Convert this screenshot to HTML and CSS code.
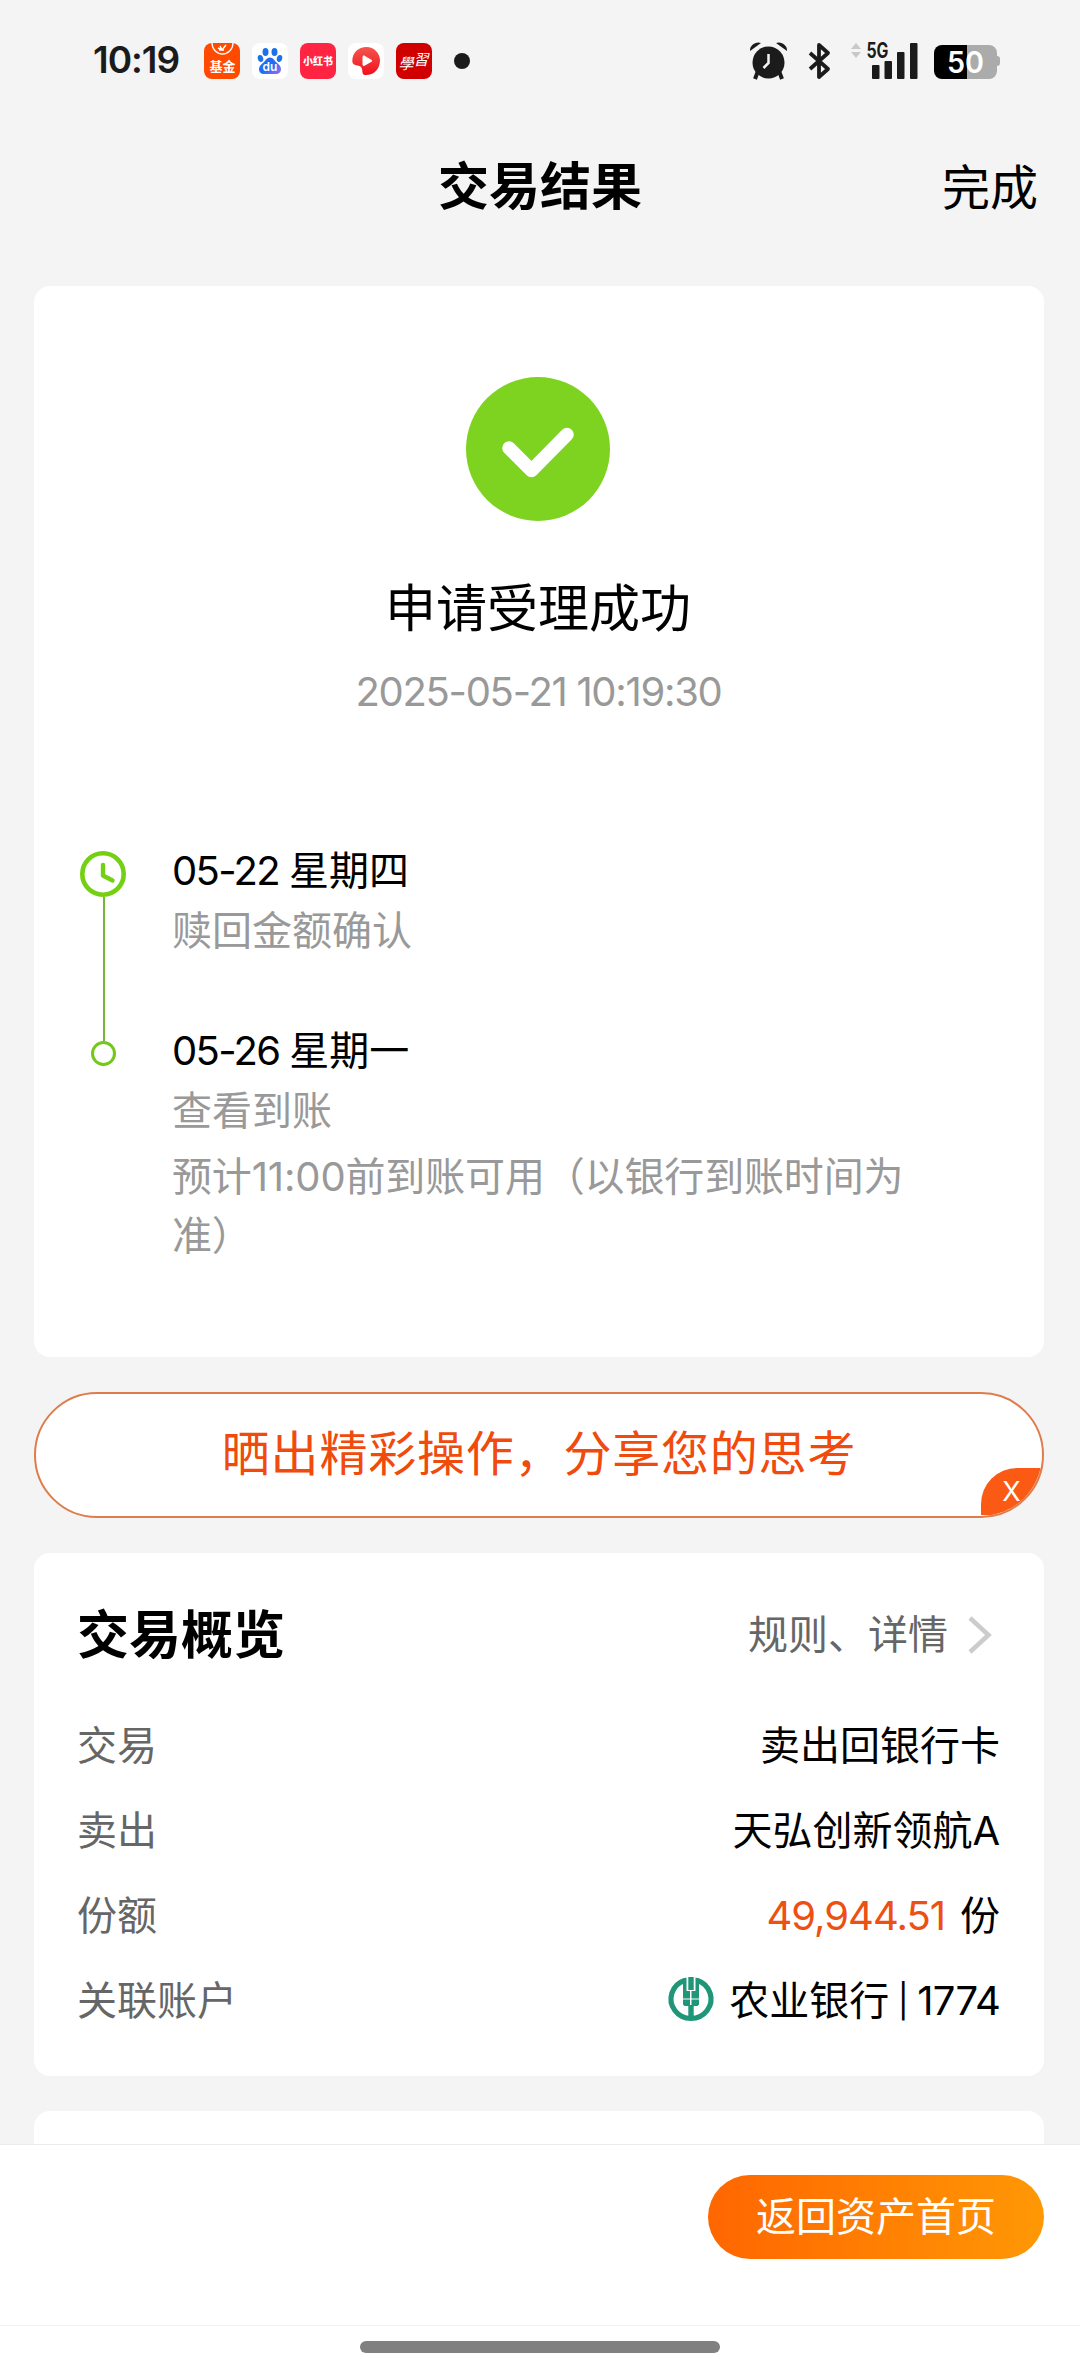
FILE: index.html
```
<!DOCTYPE html>
<html lang="zh-CN">

<head>
    <meta charset="UTF-8">
    <meta name="viewport" content="width=device-width, initial-scale=1.0">
    <title>交易结果</title>
    <link rel="stylesheet" href="styles.css">
</head>

<body>
    <div class="status">
        <span class="clock">10:19</span>
        <div class="apps">
            <svg class="app" viewBox="0 0 36 36">
                <rect width="36" height="36" rx="8" fill="#ff4a00" />
                <path d="M8 0a10.500 11 0 0 0 21 0" fill="none" stroke="#fff" stroke-width="1.300" />
                <path d="M14 5l4 2 4-5M16 3l2 4M15 7l5 0" fill="none" stroke="#fff" stroke-width="1.500" />
                <text x="18.500" y="28" font-size="13" font-weight="700" fill="#fff" text-anchor="middle">基金</text>
            </svg>
            <svg class="app" viewBox="0 0 36 36">
                <defs>
                    <linearGradient id="paw" x1="0" y1="0" x2="1" y2="1">
                        <stop offset="0.500" stop-color="#1f6ff0" />
                        <stop offset="1" stop-color="#a06cf5" />
                    </linearGradient>
                </defs>
                <rect width="36" height="36" rx="8" fill="#fff" />
                <g fill="#1a73ea">
                    <ellipse cx="13.500" cy="9" rx="3" ry="4" />
                    <ellipse cx="22.500" cy="9" rx="3" ry="4" />
                    <ellipse cx="8.500" cy="15.500" rx="2.700" ry="3.500" transform="rotate(-15 8.500 15.500)" />
                    <ellipse cx="27.500" cy="15.500" rx="2.700" ry="3.500" transform="rotate(15 27.500 15.500)" />
                </g>
                <path d="M18 14.500c3 0 4.500 3 6.500 5 2.500 2 4.500 4 4.500 6.500 0 3-2 5-5 5H12c-3 0-5-2-5-5 0-2.500 2-4.500 4.500-6.500 2-2 3.500-5 6.500-5z" fill="url(#paw)" />
                <text class="latin" x="18" y="28" font-size="12" font-weight="600" fill="#fff" text-anchor="middle">du</text>
            </svg>
            <svg class="app" viewBox="0 0 36 36">
                <rect width="36" height="36" rx="8" fill="#ff2442" />
                <text x="18" y="22" font-size="10" font-weight="900" fill="#fff" text-anchor="middle">小红书</text>
            </svg>
            <svg class="app" viewBox="0 0 36 36">
                <defs>
                    <linearGradient id="melon" x1="0" y1="0" x2="0" y2="1">
                        <stop offset="0" stop-color="#f5564e" />
                        <stop offset="1" stop-color="#f0101c" />
                    </linearGradient>
                </defs>
                <rect width="36" height="36" rx="8" fill="#fff" />
                <path d="M4.300 18C4.300 9.500 10.500 4 18.500 4 26 4 32 10 32 17.500 32 26 26 32 18 32c-3 0-3.500-1.500-3.700-4-.3-3.500-1.300-5-5-5.500-3-.3-5-1.500-5-4.500z" fill="url(#melon)" />
                <path d="M14.500 14.500c0-2 1-2.300 2.500-1.500l6 3.400c1.500 1 1.500 1.700 0 2.700l-6 3.400c-1.500.8-2.500.4-2.500-1.500z" fill="#fff" />
            </svg>
            <svg class="app" viewBox="0 0 36 36">
                <rect width="36" height="36" rx="8" fill="#d00000" />
                <g fill="#fff" font-size="15" text-anchor="middle">
                    <text x="11" y="26" transform="translate(5.500 0) skewX(-14)">學</text>
                    <text x="25" y="22" transform="translate(5.500 0) skewX(-14)">習</text>
                </g>
            </svg>
        </div>
        <span class="dot"></span>
        <svg class="indicators" width="252" height="40" viewBox="0 0 252 40">
            <g fill="#1b1b1b">
                <circle cx="18.500" cy="21.500" r="16" />
                <path d="M8 30l-3 8M29 30l3 8" stroke="#1b1b1b" stroke-width="4" />
                <path d="M0 10C-.5 4 6 0 11 2z" />
                <path d="M37 10C37.500 4 31 0 26 2z" />
            </g>
            <path d="M18.500 13v9l-5 5" fill="none" stroke="#f4f4f4" stroke-width="2.500" />
            <path d="M60 12l18 16-9 8V4l9 8-18 16" fill="none" stroke="#1b1b1b" stroke-width="3.800" stroke-linejoin="round" />
            <path d="M101 8l5-6 5 6zM101 11l5 6 5-6z" fill="#c8c8c8" />
            <text class="latin" x="127.500" y="16.500" font-size="21" font-weight="700" fill="#1b1b1b" text-anchor="middle" textLength="22" lengthAdjust="spacingAndGlyphs">5G</text>
            <g fill="#1b1b1b">
                <rect x="122" y="24" width="7.500" height="14" rx="1" />
                <rect x="134.500" y="20" width="7.500" height="18" rx="1" />
                <rect x="147" y="11" width="7.500" height="27" rx="1" />
                <rect x="160" y="2" width="7.500" height="36" rx="1" />
            </g>
            <path d="M217 4h22a8 8 0 0 1 8 8v3q3 0 3 3v4q0 3-3 3v5a8 8 0 0 1-8 8h-22z" fill="#ababab" />
            <path d="M217 4h-25a8 8 0 0 0-8 8v18a8 8 0 0 0 8 8h25z" fill="#000" />
            <text class="latin" x="215.500" y="32" font-size="30" font-weight="600" fill="#fff" text-anchor="middle" textLength="37" lengthAdjust="spacingAndGlyphs">50</text>
        </svg>
    </div>

    <header class="nav">
        <h1>交易结果</h1>
        <a class="done">完成</a>
    </header>

    <main>
        <section class="card result">
            <svg class="success" viewBox="0 0 144 144">
                <circle cx="72" cy="72" r="72" fill="#7ed321" />
                <path d="M43 71l22.500 22.500L101 57.500" fill="none" stroke="#fff" stroke-width="13.500" stroke-linecap="round" stroke-linejoin="round" />
            </svg>
            <h2>申请受理成功</h2>
            <p class="time">2025-05-21 10:19:30</p>

            <ul class="timeline">
                <li>
                    <div class="marker">
                        <svg class="marker-clock" viewBox="0 0 46 46">
                            <circle cx="23" cy="23" r="20.700" fill="none" stroke="#74d012" stroke-width="4.600" />
                            <path d="M23 14v10.500l9.500 5" fill="none" stroke="#74d012" stroke-width="4.400" stroke-linecap="round" stroke-linejoin="round" />
                        </svg>
                        <span class="line"></span>
                    </div>
                    <div class="step">
                        <h3><span class="day">05-22</span><span>星期四</span></h3>
                        <p>赎回金额确认</p>
                    </div>
                </li>
                <li>
                    <div class="marker">
                        <span class="line short"></span>
                        <span class="ring"></span>
                    </div>
                    <div class="step">
                        <h3><span class="day">05-26</span><span>星期一</span></h3>
                        <p>查看到账</p>
                        <p class="note">预计11:00前到账可用（以银行到账时间为准）</p>
                    </div>
                </li>
            </ul>
        </section>

        <section class="banner">
            <span>晒出精彩操作，分享您的思考</span>
            <button class="close">X</button>
        </section>

        <section class="card overview">
            <div class="overview-head">
                <h2>交易概览</h2>
                <a class="rules">规则、详情
                    <svg class="chevron" viewBox="0 0 24 38">
                        <path d="M2 2l18.500 17L2 36" fill="none" stroke="#ccc" stroke-width="4.500" />
                    </svg>
                </a>
            </div>
            <dl>
                <div class="row">
                    <dt>交易</dt>
                    <dd>卖出回银行卡</dd>
                </div>
                <div class="row">
                    <dt>卖出</dt>
                    <dd>天弘创新领航A</dd>
                </div>
                <div class="row">
                    <dt>份额</dt>
                    <dd><span class="amount">49,944.51</span>份</dd>
                </div>
                <div class="row">
                    <dt>关联账户</dt>
                    <dd>
                        <svg class="bank" viewBox="0 0 46 44">
                            <path d="M16.500 3.500A20 19.500 0 1 0 29.500 3.500" fill="none" stroke="#1f9678" stroke-width="5.200" />
                            <g fill="#1f9678">
                                <path d="M15 1.500l3.500-1V14H22v7.500h-7zM31 1.500l-3.500-1V14h-4v7.500H31z" />
                                <path d="M20.300 0h5.400v13h-5.400z" />
                                <path d="M15 22.600h7V29h-5.500L15 27.500zM23.500 22.600H31v4.900L29.500 29h-6z" />
                                <path d="M20.300 28h5.400v14h-5.400z" />
                            </g>
                        </svg>
                        <span>农业银行</span>
                        <span class="divider">|</span>
                        <span class="tail">1774</span>
                    </dd>
                </div>
            </dl>
        </section>

        <section class="card next"></section>
    </main>

    <footer>
        <div class="actions">
            <button class="home">返回资产首页</button>
        </div>
        <div class="gesture"><span></span></div>
    </footer>
</body>

</html>
```
FILE: styles.css
```
* {
    margin: 0;
    padding: 0;
    box-sizing: border-box;
}

body {
    width: 1080px;
    height: 2374px;
    display: flex;
    flex-direction: column;
    overflow: hidden;
    background: #f4f4f4;
    color: #000;
    font-family: Inter, "Noto Sans CJK SC", sans-serif;
    font-size: 40px;
    line-height: 60px;
}

h1,
h2,
h3 {
    font-weight: 400;
}

ul {
    list-style: none;
}

button {
    border: none;
    font-family: inherit;
    cursor: pointer;
}

svg {
    display: block;
    flex-shrink: 0;
    overflow: visible;
}

svg text {
    font-family: "Noto Sans CJK SC", sans-serif;
}

svg text.latin {
    font-family: Inter, sans-serif;
}

/* status bar */
.status {
    height: 122px;
    flex-shrink: 0;
    display: flex;
    align-items: center;
    padding: 0 78px 0 93px;
}

.clock {
    width: 111px;
    padding-bottom: 2px;
    font-size: 37px;
    font-weight: 600;
    letter-spacing: -1px;
    color: #1b1b1b;
}

.apps {
    display: flex;
    gap: 12px;
}

.app {
    width: 36px;
    height: 36px;
}

.dot {
    width: 16px;
    height: 16px;
    margin-left: 22px;
    border-radius: 50%;
    background: #1b1b1b;
}

.indicators {
    margin-left: auto;
}

/* title bar */
.nav {
    height: 128px;
    flex-shrink: 0;
    display: grid;
    grid-template-columns: 1fr auto 1fr;
    align-items: center;
    padding: 1px 42px 0;
}

.nav h1 {
    grid-column: 2;
    font-size: 51px;
    font-weight: 700;
}

.done {
    justify-self: end;
    padding-top: 2px;
    font-size: 48px;
}

main {
    flex: 1;
    min-height: 0;
    overflow: hidden;
    display: flex;
    flex-direction: column;
    gap: 35px;
    padding: 36px 36px 0 34px;
}

.card {
    flex-shrink: 0;
    background: #fff;
    border-radius: 16px;
}

/* result */
.result {
    height: 1071px;
    padding-top: 91px;
    text-align: center;
}

.success {
    width: 144px;
    height: 144px;
    margin: 0 auto;
    position: relative;
    left: -1px;
}

.result h2 {
    margin-top: 58px;
    padding-right: 2px;
    font-size: 51px;
}

.time {
    margin-top: 23px;
    padding-right: 1px;
    color: #999;
    letter-spacing: -1.3px;
}

.timeline {
    margin-top: 119px;
    padding: 0 110px 0 46px;
    text-align: left;
}

.timeline li {
    display: flex;
    gap: 46px;
}

.timeline li:first-child .step {
    padding-bottom: 60px;
}

.marker {
    width: 46px;
    flex-shrink: 0;
    display: flex;
    flex-direction: column;
    align-items: center;
}

.marker-clock {
    width: 46px;
    height: 46px;
    margin-top: 10px;
}

.line {
    width: 2px;
    flex: 1;
    margin-left: 1px;
    background: #76b43a;
}

.line.short {
    flex: none;
    height: 20px;
}

.ring {
    width: 25px;
    height: 25px;
    border: 3px solid #74c81a;
    border-radius: 50%;
}

.step h3 {
    display: flex;
    gap: 10px;
    font-size: 40px;
}

.day {
    letter-spacing: -1.7px;
}

.step p {
    color: #999;
}

.step .note {
    margin-top: 6px;
    line-height: 59px;
    letter-spacing: -0.15px;
}

/* share banner */
.banner {
    height: 126px;
    flex-shrink: 0;
    position: relative;
    display: flex;
    align-items: center;
    justify-content: center;
    overflow: hidden;
    padding-bottom: 2px;
    background: #fff;
    border: 2px solid #de7c4c;
    border-radius: 63px;
    color: #f04a0c;
    font-size: 48px;
    letter-spacing: 0.8px;
}

.close {
    position: absolute;
    right: 0;
    bottom: 1px;
    width: 61px;
    height: 47px;
    border-radius: 36px 0 0 0;
    background: #fb5a14;
    color: #fff;
    font-size: 27px;
    line-height: 48px;
    text-align: center;
}

/* overview */
.overview {
    height: 523px;
    padding: 53px 44px 0 43px;
}

.overview-head {
    display: flex;
    justify-content: space-between;
    align-items: center;
}

.overview-head h2 {
    font-size: 52px;
    font-weight: 700;
}

.rules {
    display: flex;
    align-items: center;
    gap: 20px;
    margin: -2px 8px 0 0;
    color: #666;
}

.chevron {
    width: 24px;
    height: 38px;
}

dl {
    margin-top: 37px;
}

.row {
    height: 85px;
    display: flex;
    justify-content: space-between;
    align-items: center;
}

dt {
    color: #666;
}

dd {
    display: flex;
    align-items: center;
}

.amount {
    margin-right: 15px;
    letter-spacing: -1px;
    color: #ec5012;
}

.bank {
    width: 46px;
    height: 44px;
    margin: -3px 15px 0 0;
}

.divider {
    width: 28px;
    font-size: 33px;
    text-align: center;
}

.tail {
    letter-spacing: -0.8px;
}

.next {
    height: 200px;
}

/* bottom bar */
footer {
    height: 230px;
    flex-shrink: 0;
    background: #fff;
    border-top: 1px solid #ebebeb;
}

.actions {
    height: 181px;
    display: flex;
    justify-content: flex-end;
    align-items: flex-start;
    padding: 30px 36px 0 0;
    border-bottom: 1px solid #f2f2f2;
}

.home {
    width: 336px;
    height: 84px;
    padding-bottom: 7px;
    border-radius: 42px;
    background: linear-gradient(to right, #ff6600, #ff9805);
    color: #fff;
    font-size: 40px;
}

.gesture {
    display: flex;
    justify-content: center;
    padding-top: 15px;
}

.gesture span {
    width: 360px;
    height: 12px;
    border-radius: 6px;
    background: #808080;
}
```
